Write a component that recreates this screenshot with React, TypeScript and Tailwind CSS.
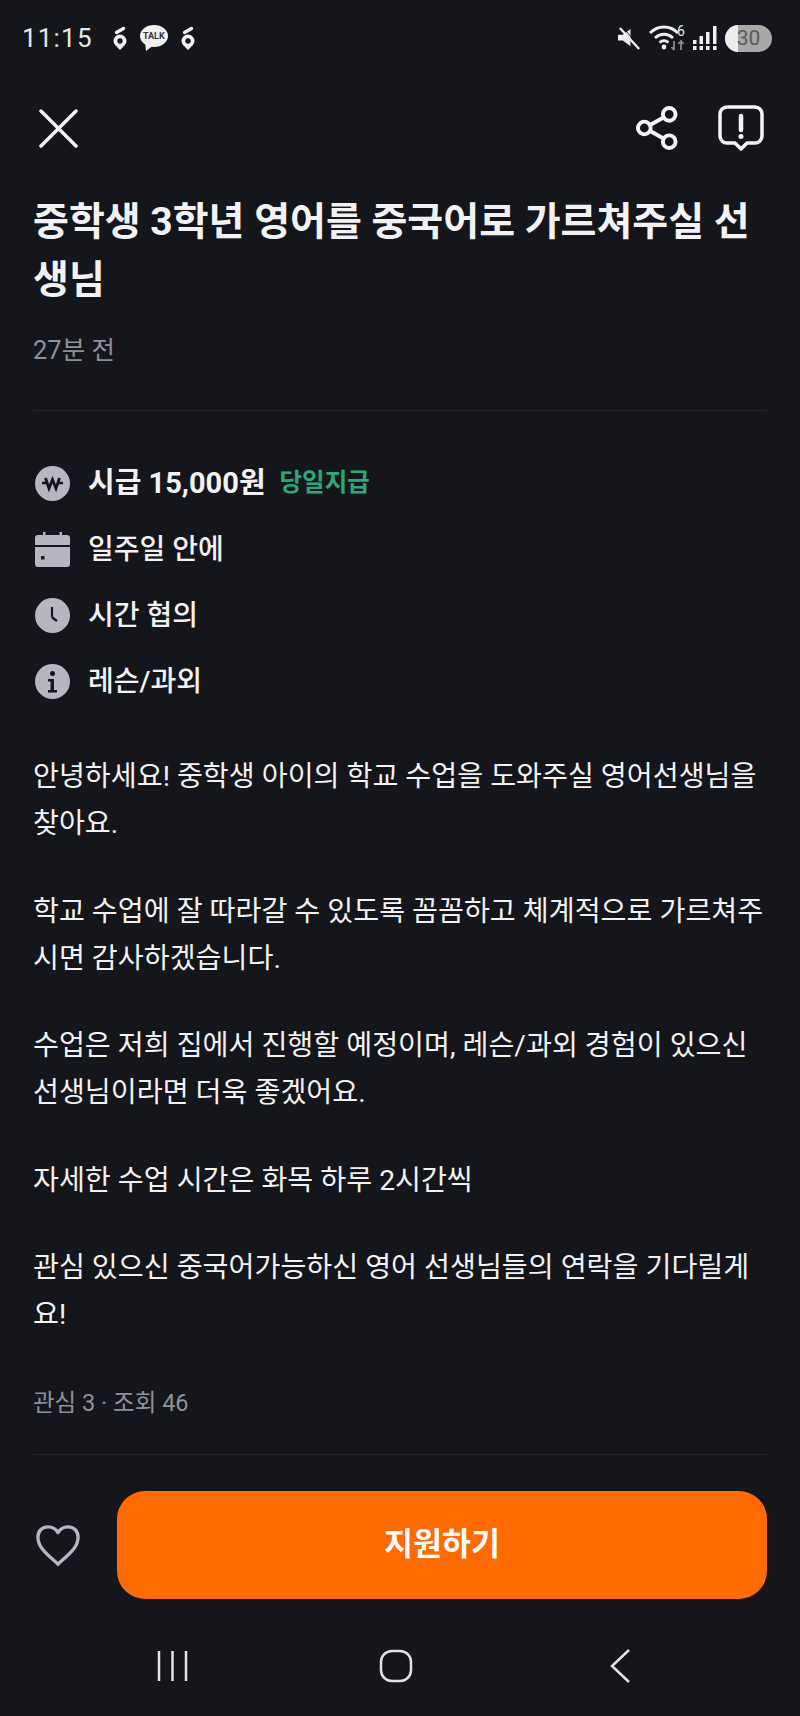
import React from 'react';

const bodyParagraphs = [
  ['안녕하세요! 중학생 아이의 학교 수업을 도와주실 영어선생님을', '찾아요.'],
  ['학교 수업에 잘 따라갈 수 있도록 꼼꼼하고 체계적으로 가르쳐주', '시면 감사하겠습니다.'],
  ['수업은 저희 집에서 진행할 예정이며, 레슨/과외 경험이 있으신', '선생님이라면 더욱 좋겠어요.'],
  ['자세한 수업 시간은 화목 하루 2시간씩'],
  ['관심 있으신 중국어가능하신 영어 선생님들의 연락을 기다릴게', '요!'],
];

const NotifIcon = () => (
  <svg width="14" height="24" viewBox="0 0 14 24" fill="none">
    <circle cx="7" cy="15" r="4.600" stroke="#f3f3f3" strokeWidth="3.800" />
    <path d="M3.500 20.500h7L7 24z" fill="#f3f3f3" />
    <path d="M3.500 6.500L10.500 2.500" stroke="#f3f3f3" strokeWidth="3.400" strokeLinecap="round" />
  </svg>
);

const StatusBar = () => (
  <div className="h-[76px] pl-[22px] pr-[28px] flex items-center justify-between">
    <div className="flex items-center">
      <span className="text-[26px] leading-none text-[#e8e8e8] tracking-[1.200px] font-['Roboto',sans-serif]">11:15</span>
      <div className="ml-[20px] flex items-center gap-[13px]">
        <NotifIcon />
        <div className="relative w-[28px] h-[26px]">
          <svg width="28" height="26" viewBox="0 0 28 26">
            <ellipse cx="14" cy="11" rx="14" ry="11" fill="#f0f0f0" />
            <path d="M5 17l1 9 8-6z" fill="#f0f0f0" />
          </svg>
          <span className="absolute left-0 top-[6px] w-full text-center text-[9px] leading-[10px] font-bold text-[#333] font-['Roboto',sans-serif]">TALK</span>
        </div>
        <NotifIcon />
      </div>
    </div>
    <div className="flex items-center">
      <svg width="25" height="25" viewBox="0 0 26 26" fill="#f0f0f0">
        <path d="M1 9h5l8-6v18l-8-6H1z" />
        <path d="M3 2l20 22" stroke="#f0f0f0" strokeWidth="2.400" />
        <path d="M3 2l20 22" stroke="#15161b" strokeWidth="1" transform="translate(2 -1.500)" />
      </svg>
      <svg className="ml-[7px]" width="37" height="28" viewBox="0 0 37 28" fill="none">
        <path d="M1 9C9 1 21 1 29 9" stroke="#f0f0f0" strokeWidth="2.800" />
        <path d="M6 14c5.500-5 12.500-5 18 0" stroke="#f0f0f0" strokeWidth="2.800" />
        <path d="M10.500 18.500c3-2.500 6-2.500 9 0" stroke="#f0f0f0" strokeWidth="2.800" />
        <circle cx="15" cy="23" r="2.400" fill="#f0f0f0" />
        <path d="M25 17v9M22.500 23l2.500 3M32 26v-9M29.500 20l2.500-3 2.500 3" stroke="#8a8a8a" strokeWidth="1.800" />
        <text x="28" y="12" fontSize="14" fill="#e8e8e8" fontFamily="Roboto, sans-serif">6</text>
      </svg>
      <svg className="ml-[7px]" width="24" height="26" viewBox="0 0 24 26" fill="#f0f0f0">
        <path d="M0 15h3.500v4H0zM0 21h3.500v4H0zM6.500 11H10v8H6.500zM6.500 21H10v4H6.500zM13 7h3.500v12H13zM13 21h3.500v4H13zM20 1h3.500v18H20zM20 21h3.500v4H20z" />
      </svg>
      <div className="ml-[8px] relative w-[47px] h-[27px] rounded-full bg-[#a8a8a8] overflow-hidden">
        <div className="w-[13px] h-full bg-[#ececec]" />
        <span className="absolute inset-0 text-center text-[21px] leading-[27px] text-[#5a5a5a] font-['Roboto',sans-serif]">30</span>
      </div>
    </div>
  </div>
);

const Header = () => (
  <div className="h-[53px] mt-[26px] pl-[39px] pr-[36px] flex items-center justify-between">
    <svg width="39" height="39" viewBox="0 0 39 39" fill="none" stroke="#f5f5f5" strokeWidth="3.500" strokeLinecap="round">
      <path d="M2 2l35 35M37 2L2 37" />
    </svg>
    <div className="flex items-center gap-[39px] mt-[-2px]">
      <svg width="43" height="46" viewBox="0 0 44 46" fill="none" stroke="#f5f5f5" strokeWidth="4">
        <circle cx="34" cy="9" r="6.500" />
        <circle cx="8.500" cy="23" r="6.500" />
        <circle cx="34" cy="37" r="6.500" />
        <path d="M14.500 20l14-8M14.500 26l14 8" />
      </svg>
      <svg width="46" height="46" viewBox="0 0 46 46" fill="none">
        <path d="M9 2h28a7 7 0 0 1 7 7v22a7 7 0 0 1-7 7h-8l-6 6-6-6H9a7 7 0 0 1-7-7V9a7 7 0 0 1 7-7z" stroke="#f5f5f5" strokeWidth="3.500" strokeLinejoin="round" />
        <path d="M23 11v14" stroke="#f5f5f5" strokeWidth="4.500" strokeLinecap="round" />
        <circle cx="23" cy="31.500" r="2.500" fill="#f5f5f5" />
      </svg>
    </div>
  </div>
);

const WonIcon = () => (
  <svg width="35" height="35" viewBox="0 0 35 35">
    <circle cx="17.500" cy="17.500" r="17.500" fill="#b5b6bf" />
    <path d="M10.500 12l3.500 10.500 3.500-9 3.500 9L24.500 12" fill="none" stroke="#15161b" strokeWidth="2.800" />
    <path d="M7 17h5M23 17h5" fill="none" stroke="#15161b" strokeWidth="2.400" />
  </svg>
);

const CalendarIcon = () => (
  <svg width="35" height="35" viewBox="0 0 35 35">
    <path d="M3 3h29a3 3 0 0 1 3 3v7H0V6a3 3 0 0 1 3-3zM0 15h35v17a3 3 0 0 1-3 3H3a3 3 0 0 1-3-3z" fill="#b5b6bf" />
    <path d="M8 0h2.500v4H8zM24.500 0H27v4h-2.500z" fill="#b5b6bf" />
    <path d="M6 24h3.500v3.500H6z" fill="#15161b" />
  </svg>
);

const ClockIcon = () => (
  <svg width="35" height="35" viewBox="0 0 35 35">
    <circle cx="17.500" cy="17.500" r="17.500" fill="#b5b6bf" />
    <path d="M17 9v8.500q0 2 1.500 3l3.500 2.500" fill="none" stroke="#15161b" strokeWidth="2.200" />
  </svg>
);

const InfoIcon = () => (
  <svg width="35" height="35" viewBox="0 0 35 35">
    <circle cx="17.500" cy="17.500" r="17.500" fill="#b5b6bf" />
    <circle cx="17.500" cy="9.500" r="2.500" fill="#15161b" />
    <path d="M13 15h6v11h3v2.500H13V26h2.500v-8.500H13z" fill="#15161b" />
  </svg>
);

export default function App() {
  return (
    <div className="w-[800px] h-[1716px] bg-[#15161b] flex flex-col font-['Roboto','Noto_Sans_CJK_KR',sans-serif] text-[#f2f2f4]">
      <StatusBar />
      <Header />

      <div className="px-[33px] flex-1 flex flex-col">
        <h1 className="mt-[38px] text-[39px] leading-[58px] font-bold whitespace-nowrap">
          중학생 3학년 영어를 중국어로 가르쳐주실 선<br />생님
        </h1>
        <p className="mt-[23px] text-[25.500px] leading-[36px] text-[#8f9098]">27분 전</p>
        <div className="mt-[42px] h-px bg-[#26272d]" />

        <div className="mt-[55px] pl-[2px] flex flex-col gap-[31px]">
          <div className="flex items-center h-[35px]">
            <WonIcon />
            <span className="ml-[18px] text-[29px] font-bold">시급 15,000원</span>
            <span className="ml-[14px] text-[24.500px] font-bold text-[#2aa876]">당일지급</span>
          </div>
          <div className="flex items-center h-[35px]">
            <CalendarIcon />
            <span className="ml-[18px] text-[28px] font-medium">일주일 안에</span>
          </div>
          <div className="flex items-center h-[35px]">
            <ClockIcon />
            <span className="ml-[18px] text-[28px] font-medium">시간 협의</span>
          </div>
          <div className="flex items-center h-[35px]">
            <InfoIcon />
            <span className="ml-[18px] text-[28px] font-medium">레슨/과외</span>
          </div>
        </div>

        <div className="mt-[54px] flex flex-col gap-[40.500px] text-[28.200px] leading-[47px]">
          {bodyParagraphs.map((lines, i) => (
            <p key={i}>
              {lines.map((line, j) => (
                <span key={j} className="block whitespace-nowrap">{line}</span>
              ))}
            </p>
          ))}
        </div>

        <p className="mt-[48px] text-[23.500px] leading-[34px] text-[#8f9098]">관심 3 · 조회 46</p>
        <div className="mt-[34px] h-px bg-[#26272d]" />

        <div className="mt-[36px] flex items-center">
          <svg className="ml-[3px]" width="44" height="43" viewBox="0 0 46 43" fill="none" stroke="#b5b6bf" strokeWidth="3.500" strokeLinejoin="round">
            <path d="M23 41C12 31 2 24 2 12.500 2 6 7 2 12.500 2 17 2 21 4.500 23 8c2-3.500 6-6 10.500-6C39 2 44 6 44 12.500 44 24 34 31 23 41z" />
          </svg>
          <button className="ml-[37px] flex-1 h-[108px] pb-[1px] rounded-[28px] bg-[#ff6b00] text-[31.500px] font-bold text-white">
            지원하기
          </button>
        </div>

        <div className="mt-[50px] pl-[124px] flex items-center">
          <svg width="32" height="32" viewBox="0 0 32 32" stroke="#e4e4e4" strokeWidth="2.500">
            <path d="M2 1v30M15.500 1v30M29 1v30" />
          </svg>
          <svg className="ml-[190px]" width="34" height="34" viewBox="0 0 34 34" fill="none" stroke="#e4e4e4" strokeWidth="2.500">
            <rect x="2" y="2" width="30" height="30" rx="11" />
          </svg>
          <svg className="ml-[196px]" width="24" height="34" viewBox="0 0 24 34" fill="none" stroke="#e4e4e4" strokeWidth="2.500">
            <path d="M20 1L3 17l17 16" />
          </svg>
        </div>
      </div>
    </div>
  );
}
